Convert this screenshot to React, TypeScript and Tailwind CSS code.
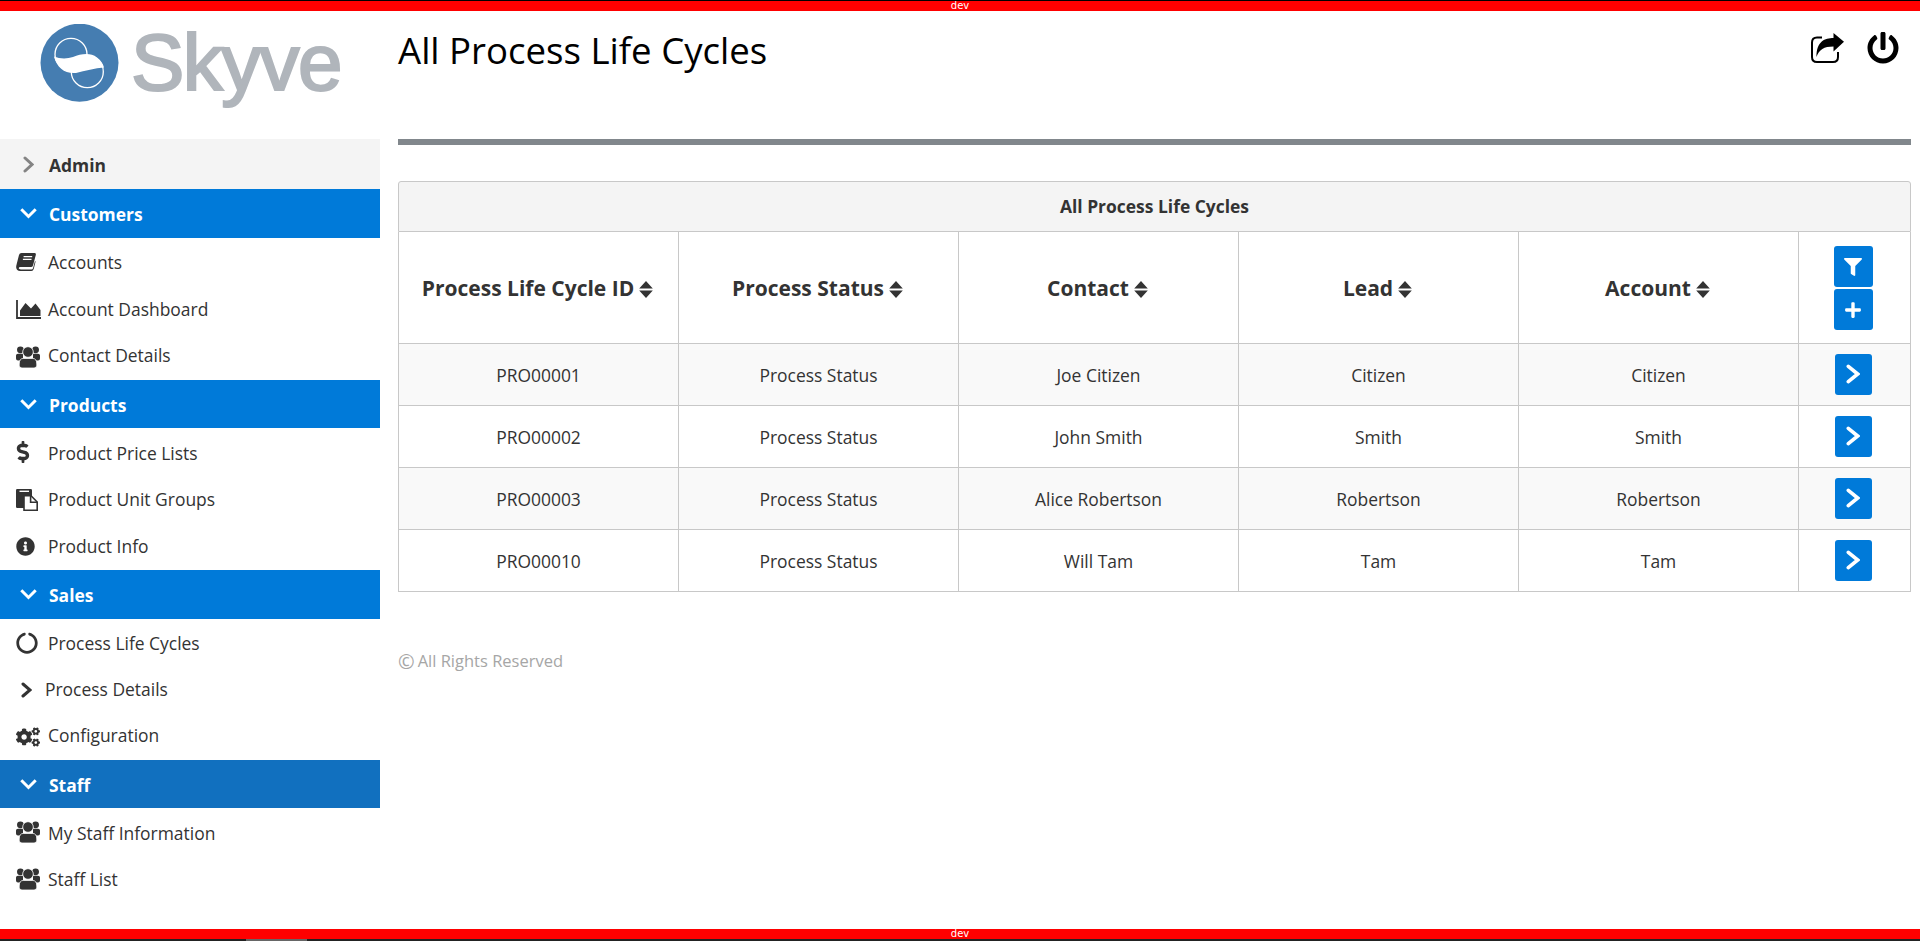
import { FaDollarSign, FaInfoCircle, FaCircleNotch, FaCogs, FaPowerOff, FaFilter, FaPlus } from 'react-icons/fa';
import type { ReactNode } from 'react';

const font = "font-['Open_Sans','Noto_Sans',sans-serif]";

function Logo() {
  return (
    <div className="h-[128px] flex items-start pl-[40px] pt-[13px]">
      <svg width="80" height="80" viewBox="0 0 80 80" className="shrink-0">
        <circle cx="39.5" cy="38.7" r="39" fill="#457db1" />
        <circle cx="31" cy="30.3" r="16" fill="none" stroke="#fff" strokeWidth="1.3" />
        <circle cx="47.3" cy="47.7" r="16" fill="none" stroke="#fff" strokeWidth="1.3" />
        <path d="M14 32.5 C20 35 27 35 33 33 C41 30 50 28 57 33.5 C61 36 63 40 64 43.5 C55 44 45 47 36 49 C25 50 17 44 14 32.5 Z" fill="#fff" />
      </svg>
      <div className="ml-[11px] mt-[-7px] text-[80px] leading-[92px] tracking-[-1.6px] text-[#b0b5bb] font-['Liberation_Sans',sans-serif] [-webkit-text-stroke:2.2px_#b0b5bb]">Skyve</div>
    </div>
  );
}

function ChevronDown() {
  return (
    <svg width="17" height="11" viewBox="0 0 17 11" fill="none" stroke="currentColor" strokeWidth="3" className="ml-[20px] shrink-0">
      <polyline points="1.3,1.3 8.5,8.5 15.7,1.3" />
    </svg>
  );
}

function ChevronRight({ w, h, sw, cls }: { w: number; h: number; sw: number; cls: string }) {
  return (
    <svg width={w} height={h} viewBox={`0 0 ${w} ${h}`} fill="none" stroke="currentColor" strokeWidth={sw} strokeLinecap="round" strokeLinejoin="miter" className={`shrink-0 ${cls}`}>
      <polyline points={`${sw / 2 + 0.5},${sw / 2 + 0.5} ${w - sw / 2 - 0.5},${h / 2} ${sw / 2 + 0.5},${h - sw / 2 - 0.5}`} />
    </svg>
  );
}

function BookIcon() {
  return (
    <svg width="20" height="18" viewBox="0 0 20 18" className="shrink-0">
      <path d="M5.5 0 H18.5 Q20.2 0 19.8 2 L17 12.5 Q16.6 14 15 14 H4.5 Q2.6 14 2.7 15.3 Q2.9 16.4 4.8 16.4 H15.5 Q16.6 16.4 17 15.2 L19 8 L19.6 8.4 L17.8 15.8 Q17.2 18 15.3 18 H4 Q0.6 18 0.2 14.6 Q0 13.4 0.7 11 L3 2 Q3.5 0 5.5 0 Z" fill="#333" />
      <path d="M7.6 3.6 H16.2 M6.9 6.4 H15.5" stroke="#fff" strokeWidth="1.4" fill="none" />
    </svg>
  );
}

function AreaIcon() {
  return (
    <svg width="25" height="19" viewBox="0 0 25 19" className="shrink-0">
      <path d="M1 0 V18 H25" stroke="#333" strokeWidth="1.8" fill="none" />
      <path d="M4 16 V10.5 L9.5 3 L15 8.5 L19.5 3.5 L24.5 10 V16 Z" fill="#333" />
    </svg>
  );
}

function UsersIcon() {
  return (
    <svg width="24" height="22" viewBox="0 0 24 22" className="shrink-0">
      <circle cx="4.4" cy="3.8" r="3.4" fill="#333" />
      <circle cx="19.6" cy="3.8" r="3.4" fill="#333" />
      <path d="M0 9.5 Q0 7.8 2 7.8 H7 V14.5 H2 Q0 14.5 0 12.5 Z M24 9.5 Q24 7.8 22 7.8 H17 V14.5 H22 Q24 14.5 24 12.5 Z" fill="#333" />
      <circle cx="12" cy="6" r="5.3" fill="#333" stroke="#fff" strokeWidth="0.8" />
      <path d="M3.2 18 Q3.2 12.4 7.5 12.4 H16.5 Q20.8 12.4 20.8 18 V19.2 Q20.8 22 18 22 H6 Q3.2 22 3.2 19.2 Z" fill="#333" stroke="#fff" strokeWidth="0.8" />
    </svg>
  );
}

function FilesIcon() {
  return (
    <svg width="22" height="22" viewBox="0 0 22 22" className="shrink-0">
      <rect x="0" y="0" width="16" height="19" rx="1.2" fill="#333" />
      <rect x="3.5" y="1.6" width="9.5" height="1.4" fill="#fff" />
      <path d="M8 6.8 H15 L21.2 13 V21.2 H8 Z" fill="#fff" stroke="#333" strokeWidth="1.6" />
      <path d="M14.6 6.8 V13.2 H21.2" fill="none" stroke="#333" strokeWidth="1.6" />
    </svg>
  );
}

function ShareIcon() {
  return (
    <svg width="33" height="30" viewBox="0 0 33 30" className="shrink-0">
      <path d="M11 4.5 H6 Q1 4.5 1 9.5 V24 Q1 29 6 29 H22 Q27 29 27 24 V19" fill="none" stroke="#000" strokeWidth="2" />
      <path d="M33 8.8 L22.5 0 V5 C14 5 5.5 8 5.5 24 C8 16.5 13 13.5 22.5 13.5 V18.5 Z" fill="#000" />
    </svg>
  );
}

function SortIcon() {
  return (
    <svg width="14" height="17" viewBox="0 0 14 17" className="inline-block ml-[5px] align-[-2px]">
      <path d="M7 0 L13.8 7.6 H0.2 Z M0.2 9.4 H13.8 L7 17 Z" fill="#333" />
    </svg>
  );
}

function Group({ title, dark, h }: { title: string; dark?: boolean; h: string }) {
  return (
    <div className={`${h} flex items-center text-white font-bold ${dark ? 'bg-[#1170bf]' : 'bg-[#007ad9]'}`}>
      <ChevronDown />
      <span className="ml-[12px] pt-[2px]">{title}</span>
    </div>
  );
}

function Item({ icon, label, h = 'h-[47px]', gap = 'w-[48px]', shift = '' }: { icon: ReactNode; label: string; h?: string; gap?: string; shift?: string }) {
  return (
    <div className={`${h} flex items-center text-[#333]`}>
      <div className={`${gap} pl-[16px] shrink-0 flex items-center`}>{icon}</div>
      <span className={shift}>{label}</span>
    </div>
  );
}

function Sidebar() {
  return (
    <aside className="w-[380px] shrink-0">
      <Logo />
      <div className="h-[50px] bg-[#f4f4f4] flex items-center text-[#333] font-bold">
        <span className="text-[#848484] flex"><ChevronRight w={11} h={17} sw={3} cls="ml-[23px]" /></span>
        <span className="ml-[15px] pt-[2px]">Admin</span>
      </div>
      <Group title="Customers" h="h-[49px]" />
      <Item icon={<BookIcon />} label="Accounts" h="h-[48px]" />
      <Item icon={<AreaIcon />} label="Account Dashboard" />
      <Item icon={<UsersIcon />} label="Contact Details" shift="pb-[2px]" />
      <Group title="Products" h="h-[48px]" />
      <Item icon={<FaDollarSign className="w-[14px] h-[22px]" />} label="Product Price Lists" h="h-[48px]" shift="pt-[2px]" />
      <Item icon={<FilesIcon />} label="Product Unit Groups" />
      <Item icon={<FaInfoCircle className="w-[19px] h-[19px]" />} label="Product Info" />
      <Group title="Sales" h="h-[49px]" />
      <Item icon={<FaCircleNotch className="w-[22px] h-[22px]" />} label="Process Life Cycles" shift="pt-[2px]" />
      <Item icon={<ChevronRight w={11} h={16} sw={3} cls="ml-[5px]" />} label="Process Details" gap="w-[45px]" />
      <Item icon={<FaCogs className="w-[24px] h-[22px]" />} label="Configuration" shift="pb-[2px]" />
      <Group title="Staff" dark h="h-[48px]" />
      <Item icon={<UsersIcon />} label="My Staff Information" shift="pt-[4px]" />
      <Item icon={<UsersIcon />} label="Staff List" shift="pt-[2px]" />
    </aside>
  );
}

const rows = [
  ['PRO00001', 'Process Status', 'Joe Citizen', 'Citizen', 'Citizen'],
  ['PRO00002', 'Process Status', 'John Smith', 'Smith', 'Smith'],
  ['PRO00003', 'Process Status', 'Alice Robertson', 'Robertson', 'Robertson'],
  ['PRO00010', 'Process Status', 'Will Tam', 'Tam', 'Tam'],
];
const headers = ['Process Life Cycle ID', 'Process Status', 'Contact', 'Lead', 'Account'];

function Btn({ w, children }: { w: string; children: ReactNode }) {
  return <div className={`${w} h-[41px] mx-auto rounded-[3px] bg-[#007ad9] text-white flex items-center justify-center`}>{children}</div>;
}

function DataTable() {
  return (
    <div className="mt-[36px]">
      <div className="h-[51px] bg-[#f4f4f4] border border-[#c8c8c8] rounded-t-[3px] flex items-center justify-center font-bold text-[#333]">All Process Life Cycles</div>
      <table className="w-full table-fixed border-collapse text-[#333]">
        <colgroup>
          <col className="w-[280px]" /><col className="w-[280px]" /><col className="w-[280px]" /><col className="w-[280px]" /><col className="w-[280px]" /><col />
        </colgroup>
        <thead>
          <tr className="h-[111px]">
            {headers.map((t) => (
              <th key={t} className="border border-t-0 border-[#c8c8c8] text-[21px] font-bold text-center pt-[2px] pr-[2px]">
                {t}<SortIcon />
              </th>
            ))}
            <th className="border border-t-0 border-[#c8c8c8] pr-[3px] pt-[2px]">
              <Btn w="w-[39px]"><FaFilter className="w-[18px] h-[18px]" /></Btn>
              <div className="h-[2px]" />
              <Btn w="w-[39px]"><FaPlus className="w-[18px] h-[18px]" /></Btn>
            </th>
          </tr>
        </thead>
        <tbody>
          {rows.map((r, i) => (
            <tr key={r[0]} className={`h-[62px] ${i % 2 === 0 ? 'bg-[#f9f9f9]' : 'bg-white'}`}>
              {r.map((c, j) => (
                <td key={j} className="border border-[#c8c8c8] text-center pt-[2px]">{c}</td>
              ))}
              <td className="border border-[#c8c8c8] pr-[3px]">
                <Btn w="w-[37px]"><ChevronRight w={14} h={20} sw={3.6} cls="" /></Btn>
              </td>
            </tr>
          ))}
        </tbody>
      </table>
    </div>
  );
}

function Main() {
  return (
    <main className="flex-1 ml-[18px] mr-[9px]">
      <div className="h-[128px] flex items-start justify-between">
        <h1 className="text-[36.6px] leading-[49px] mt-[15px] text-black font-normal">All Process Life Cycles</h1>
        <div className="flex items-center gap-[23px] mt-[20px] mr-[12px] text-black">
          <ShareIcon />
          <FaPowerOff className="w-[32px] h-[34px]" />
        </div>
      </div>
      <div className="h-[6px] bg-[#81878c]" />
      <DataTable />
      <div className="mt-[58px] h-[24px] flex items-center gap-[3px] text-[16.5px] text-[#a6a6a6]">
        <span className="text-[20px] leading-[24px]">©</span>
        <span>All Rights Reserved</span>
      </div>
    </main>
  );
}

function DevBar() {
  return <div className="h-[10px] bg-[#ff0000] text-white text-[10px] leading-[10px] text-center font-['DejaVu_Sans',sans-serif]">dev</div>;
}

export default function App() {
  return (
    <div className={`h-[941px] overflow-hidden flex flex-col bg-white text-[17.45px] ${font}`}>
      <div className="h-[1px] bg-black" />
      <DevBar />
      <div className="h-[918px] flex">
        <Sidebar />
        <Main />
      </div>
      <DevBar />
      <div className="h-[2px] bg-[#222] flex">
        <div className="ml-[246px] w-[61px] bg-[#666]" />
      </div>
    </div>
  );
}
